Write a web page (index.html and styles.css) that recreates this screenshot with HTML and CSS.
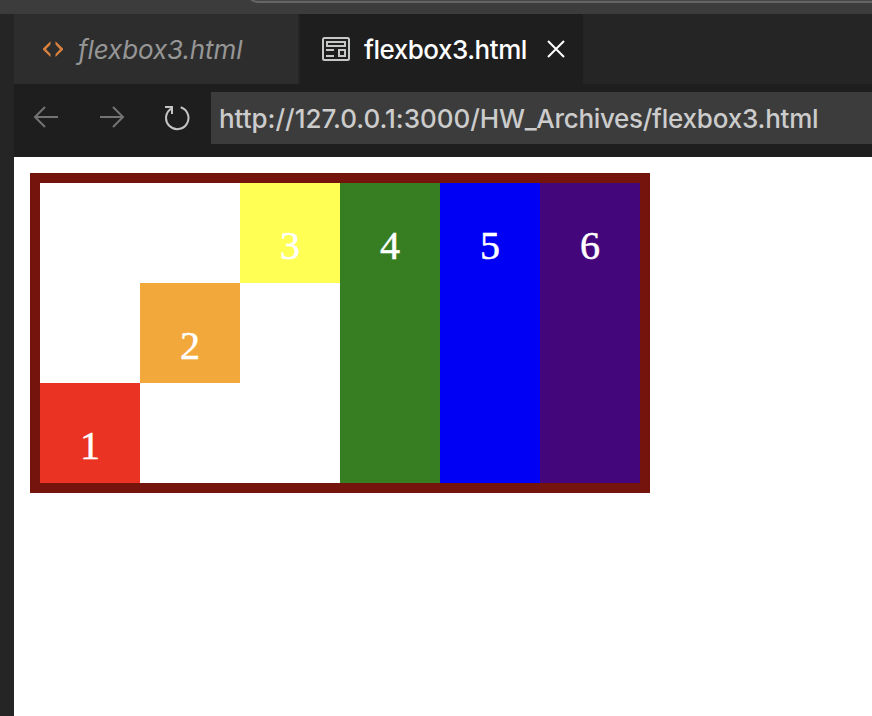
FILE: index.html
```html
<!DOCTYPE html>
<html lang="en">
<head>
<meta charset="utf-8">
<title>flexbox3.html</title>
<link rel="stylesheet" href="styles.css">
</head>
<body>
<header class="titlebar"><div class="command-center"></div></header>
<div class="workbench">
  <aside class="sidebar"></aside>
  <main class="editor">
    <nav class="tabs">
      <div class="tab">
        <svg class="icon-code" width="22" height="18" viewBox="0 0 22 18"><path d="M8.500 1.300v3.200L4 9.200l4.500 4.700v3.200L1 9.800V8.600zM13.500 1.300v3.200L18 9.200l-4.500 4.700v3.200L21 9.800V8.600z"/></svg>
        <span class="name preview">flexbox3.html</span>
      </div>
      <div class="tab active">
        <svg class="icon-page" width="28" height="24" viewBox="0 0 28 24"><rect x="1" y="1" width="26" height="22" rx="1.500"/><path d="M5 5h18v4H5zM4 13h8M4 19h8M17 13h6v6h-6z"/></svg>
        <span class="name current">flexbox3.html</span>
        <svg class="icon-close" width="18" height="18" viewBox="0 0 18 18"><path d="M1 1l16 16M17 1L1 17"/></svg>
      </div>
    </nav>
    <div class="toolbar">
      <svg class="back" width="26" height="24" viewBox="0 0 26 24"><path d="M25 11H2M12 1L2 11l10 10"/></svg>
      <svg class="forward" width="26" height="24" viewBox="0 0 26 24"><path d="M1 11h23M14 1l10 10-10 10"/></svg>
      <svg class="reload" width="26" height="26" viewBox="0 0 26 26"><path d="M16.700 2.300A11.200 11.200 0 1 1 7.600 3.300M1 2h7v7"/></svg>
      <div class="address"><span class="host">http://127.0.0.1:3000/</span><span class="folder">HW_Archives/</span><span class="file">flexbox3.html</span></div>
    </div>
    <section class="page">
      <div class="container">
        <div class="box red">1</div>
        <div class="box orange">2</div>
        <div class="box yellow">3</div>
        <div class="box green">4</div>
        <div class="box blue">5</div>
        <div class="box indigo">6</div>
      </div>
    </section>
  </main>
</div>
</body>
</html>
```
FILE: styles.css
```css
* { box-sizing: border-box; }
body {
  margin: 0;
  height: 716px;
  display: flex;
  flex-direction: column;
  overflow: hidden;
  font: 450 26px Inter, "Liberation Sans", sans-serif;
}
svg { flex: none; fill: none; stroke-width: 2; }
.titlebar { flex: none; height: 14px; background: #3c3c3c; overflow: hidden; }
.command-center {
  height: 43px;
  margin: -40px -20px 0 246px;
  border: 2px solid #656565;
  border-radius: 12px;
  background: #464646;
}
.workbench { flex: 1; display: flex; min-height: 0; }
.sidebar { flex: none; width: 14px; background: #252526; }
.editor { flex: 1; min-width: 0; display: flex; flex-direction: column; }
.tabs { flex: none; height: 70px; display: flex; background: #252526; }
.tab {
  width: 286px;
  padding-left: 28px;
  display: flex;
  align-items: center;
  background: #2d2d2d;
  border-right: 2px solid #252526;
}
.tab.active { width: 283px; padding-left: 22px; background: #1e1e1e; border: 0; }
.name { white-space: nowrap; line-height: 32px; margin-top: 2px; }
.preview { margin-left: 14px; color: #969696; font-style: italic; letter-spacing: -.1px; }
.current { margin-left: 14px; width: 183px; color: #fff; letter-spacing: -.48px; }
.icon-code { fill: #d9813f; }
.icon-page { stroke: #c5c8c6; }
.icon-close { stroke: #fff; }
.toolbar {
  flex: none;
  height: 73px;
  padding: 8px 0 13px 19px;
  display: flex;
  align-items: center;
  background: #1e1e1e;
}
.back, .forward { stroke: #737373; }
.forward { margin-left: 40px; }
.reload { margin-left: 39px; stroke: #c5c5c5; }
.address {
  flex: 1;
  height: 52px;
  margin-left: 21px;
  padding-left: 8px;
  line-height: 54px;
  white-space: nowrap;
  color: #ccc;
  background: #3c3c3c;
}
.host { letter-spacing: -.02px; }
.folder { letter-spacing: -.32px; }
.file { letter-spacing: -.2px; }
.page { flex: 1; padding: 16px; background: #fff; }
.container {
  width: 620px;
  height: 320px;
  display: flex;
  border: 10px solid #75140c;
}
.box {
  width: 100px;
  min-height: 100px;
  padding-top: 40px;
  color: #fff;
  font: 40px/46px "Liberation Serif", serif;
  -webkit-text-stroke: .5px #fff;
  text-align: center;
}
.red { align-self: flex-end; background: #ea3323; }
.orange { align-self: center; background: #f2a83b; }
.yellow { align-self: flex-start; background: #ffff54; }
.green { background: #377e22; }
.blue { background: #0000f5; }
.indigo { background: #44067b; }
```
